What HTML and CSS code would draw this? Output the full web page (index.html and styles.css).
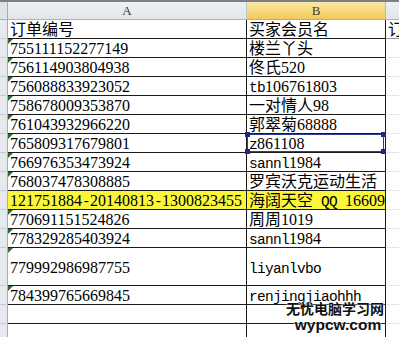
FILE: index.html
```html
<!DOCTYPE html>
<html>
<head>
<meta charset="utf-8">
<link rel="stylesheet" href="styles.css">
</head>
<body>
<div class="sheet">
  <div class="row hdr">
    <div class="rh corner"></div>
    <div class="h ha">A</div>
    <div class="h hb">B</div>
    <div class="h hc"></div>
  </div>
  <div class="row"><div class="rh"></div><div class="c a">订单编号</div><div class="c b">买家会员名</div><div class="c cc first">订单状态</div></div>
  <div class="row"><div class="rh"></div><div class="c a t">755111152277149</div><div class="c b">楼兰丫头</div><div class="c cc"></div></div>
  <div class="row"><div class="rh"></div><div class="c a t">756114903804938</div><div class="c b">佟氏520</div><div class="c cc"></div></div>
  <div class="row"><div class="rh"></div><div class="c a t">756088833923052</div><div class="c b"><span class="m">tb</span>106761803</div><div class="c cc"></div></div>
  <div class="row"><div class="rh"></div><div class="c a t">758678009353870</div><div class="c b">一对情人98</div><div class="c cc"></div></div>
  <div class="row"><div class="rh"></div><div class="c a t">761043932966220</div><div class="c b">郭翠菊68888</div><div class="c cc"></div></div>
  <div class="row"><div class="rh"></div><div class="c a t">765809317679801</div><div class="c b sel"><span class="m">z</span>861108<span class="selbox"><i class="hd tl"></i><i class="hd tr"></i><i class="hd bl"></i><i class="hd br"></i></span></div><div class="c cc"></div></div>
  <div class="row"><div class="rh"></div><div class="c a t">766976353473924</div><div class="c b"><span class="m">sannl</span>1984</div><div class="c cc"></div></div>
  <div class="row"><div class="rh"></div><div class="c a t">768037478308885</div><div class="c b">罗宾沃克运动生活</div><div class="c cc"></div></div>
  <div class="row"><div class="rh"></div><div class="c a y">121751884<span class="m">-</span>20140813<span class="m">-</span>1300823455</div><div class="c b y">海阔天空<span class="m"> QQ </span>16609</div><div class="c cc"></div></div>
  <div class="row"><div class="rh"></div><div class="c a t">770691151524826</div><div class="c b">周周1019</div><div class="c cc"></div></div>
  <div class="row"><div class="rh"></div><div class="c a t">778329285403924</div><div class="c b"><span class="m">sannl</span>1984</div><div class="c cc"></div></div>
  <div class="row tall"><div class="rh"></div><div class="c a t">779992986987755</div><div class="c b"><span class="m">liyanlvbo</span></div><div class="c cc"></div></div>
  <div class="row"><div class="rh"></div><div class="c a t">784399765669845</div><div class="c b"><span class="m">renjingjiaohhh</span></div><div class="c cc"></div></div>
  <div class="row"><div class="rh"></div><div class="c a"></div><div class="c b"></div><div class="c cc"></div></div>
  <div class="row"><div class="rh"></div><div class="c a"></div><div class="c b"></div><div class="c cc"></div></div>
</div>
<div class="wm">
  <div class="wm1">无忧电脑学习网</div>
  <div class="wm2">wypcw.com</div>
</div>
</body>
</html>
```
FILE: styles.css
```css
html, body {
  margin: 0;
  padding: 0;
}
body {
  width: 399px;
  height: 337px;
  overflow: hidden;
  background: #fff;
  position: relative;
  font-family: "Liberation Serif", "Noto Sans CJK SC", serif;
}
.sheet {
  display: flex;
  flex-direction: column;
}
.row {
  display: flex;
  height: 19px;
  flex: none;
}
.row.tall {
  height: 38px;
}
.row.hdr {
  height: 20px;
  border-top: 2px solid #7b8087;
  box-sizing: border-box;
}
.rh {
  width: 8px;
  flex: none;
  box-sizing: border-box;
  background: #e6e9ee;
  border-right: 1px solid #a3acb8;
  border-bottom: 1px solid #c9ced6;
}
.corner {
  background: #dfe3e8;
  border-bottom: 1px solid #a3acb8;
}
.h {
  box-sizing: border-box;
  display: flex;
  align-items: center;
  justify-content: center;
  font-family: "Liberation Serif", serif;
  font-size: 13px;
  color: #3a3a3a;
  padding-top: 1px;
}
.ha {
  width: 239px;
  background: linear-gradient(#eef0f3, #e1e5ea);
  border-bottom: 1px solid #aab3be;
  border-right: 1px solid #c2c8d0;
}
.hb {
  width: 139px;
  background: linear-gradient(#fae9a6, #f7d675 60%, #f3c85e);
  border-bottom: 1px solid #e0a63c;
  border-right: 1px solid #d8b45a;
}
.hc {
  flex: 1;
  background: linear-gradient(#eef0f3, #e1e5ea);
  border-bottom: 1px solid #aab3be;
}
.c {
  box-sizing: border-box;
  padding: 1px 0 0 2px;
  white-space: nowrap;
  overflow: hidden;
  font-size: 16px;
  line-height: 18px;
  color: #000;
  position: relative;
}
.tall .c {
  padding-top: 11px;
}
.m {
  font-family: "Liberation Mono", monospace;
  font-size: 14.5px;
  letter-spacing: -0.7px;
  white-space: pre;
}
.a {
  width: 239px;
  border-right: 1px solid #1a1a1a;
  border-bottom: 1px solid #1a1a1a;
}
.b {
  width: 139px;
  border-right: 1px solid #1a1a1a;
  border-bottom: 1px solid #1a1a1a;
}
.cc {
  flex: 1;
  border-bottom: 1px solid #e4e6e8;
}
.cc.first {
  border-bottom-color: #9a9a9a;
}
.y {
  background: #fbf63c;
}
.t::before {
  content: "";
  position: absolute;
  left: 0;
  top: 0;
  border-top: 5px solid #2c6a30;
  border-right: 5px solid transparent;
}
.sel {
  overflow: visible;
}
.selbox {
  position: absolute;
  left: 0;
  top: 0;
  right: 1px;
  bottom: 0;
  border: 1px solid #2c3f92;
  z-index: 2;
}
.hd {
  position: absolute;
  width: 5px;
  height: 5px;
  background: #1d2a78;
}
.tl { left: -3px; top: -3px; }
.tr { right: -3px; top: -3px; }
.bl { left: -3px; bottom: -3px; }
.br { right: -3px; bottom: -3px; }
.wm {
  position: absolute;
  left: 286px;
  top: 300px;
  z-index: 3;
  text-align: center;
  color: #111;
}
.wm1 {
  font-family: "Noto Sans CJK SC", sans-serif;
  font-weight: 700;
  font-size: 14px;
  line-height: 17px;
  text-shadow: 0 0 2px #fff, 0 0 2px #fff;
}
.wm2 {
  font-family: "Liberation Sans", sans-serif;
  font-weight: 700;
  font-size: 15.5px;
  line-height: 16px;
  padding-left: 6px;
  text-shadow: 0 0 2px #fff, 0 0 2px #fff;
}
```
